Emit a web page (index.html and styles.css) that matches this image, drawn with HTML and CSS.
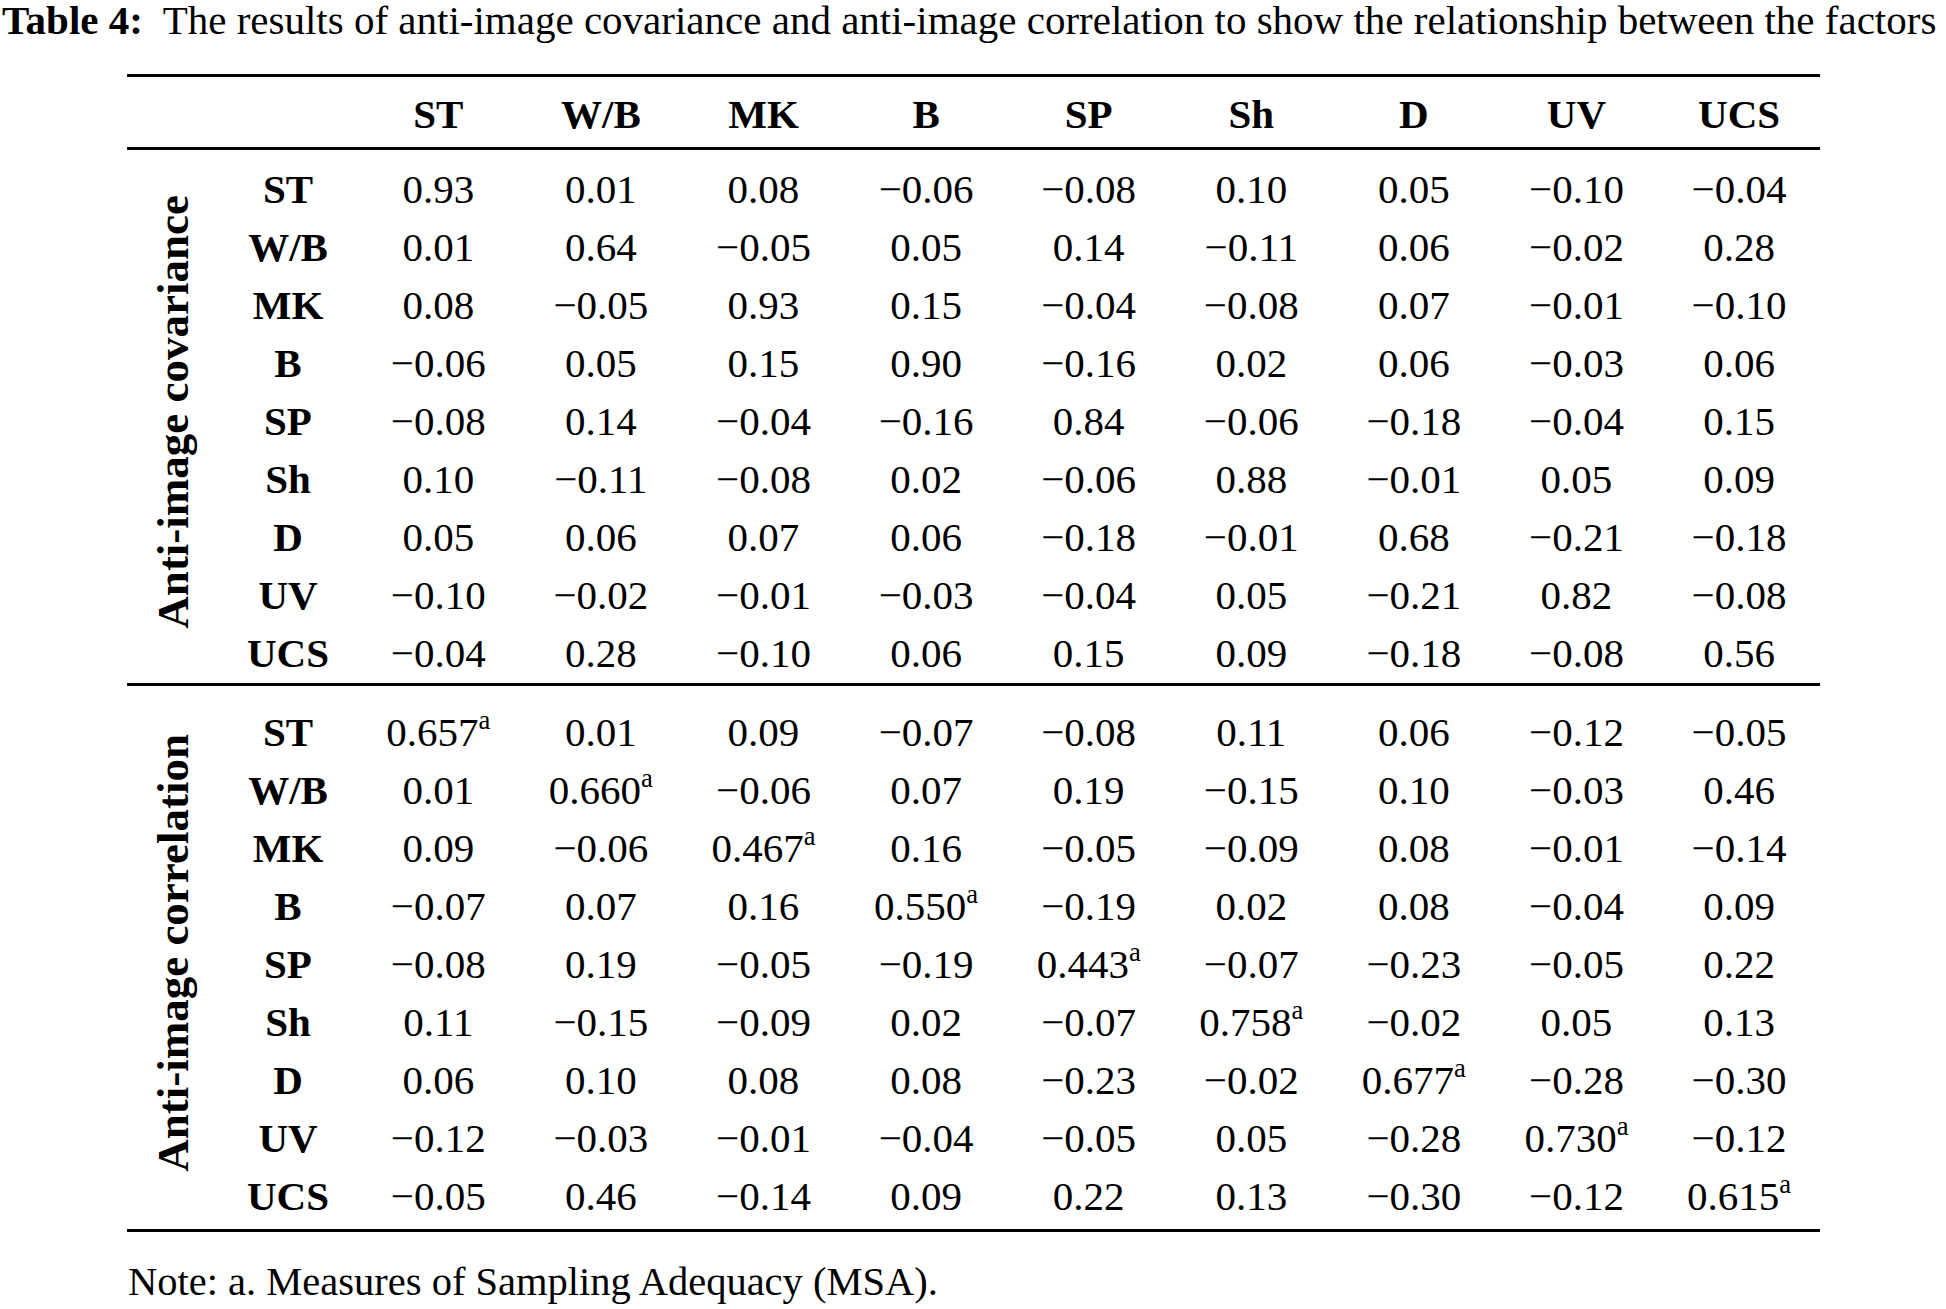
FILE: index.html
```html
<!DOCTYPE html>
<html lang="en">
<head>
<meta charset="utf-8">
<title>Table 4</title>
<link rel="stylesheet" href="styles.css">
</head>
<body>
<div class="page">
  <p class="caption"><b>Table 4:</b>&nbsp; The results of anti-image covariance and anti-image correlation to show the relationship between the factors</p>
  <table class="data">
    <colgroup>
      <col class="c-group"><col class="c-row">
      <col class="c-num"><col class="c-num"><col class="c-num"><col class="c-num"><col class="c-num"><col class="c-num"><col class="c-num"><col class="c-num"><col class="c-num">
    </colgroup>
    <thead>
      <tr><th colspan="2"></th><th>ST</th><th>W/B</th><th>MK</th><th>B</th><th>SP</th><th>Sh</th><th>D</th><th>UV</th><th>UCS</th></tr>
    </thead>
    <tbody class="sec sec1">
      <tr><th rowspan="9" class="group"><span>Anti-image covariance</span></th><th class="rh">ST</th><td>0.93</td><td>0.01</td><td>0.08</td><td>−0.06</td><td>−0.08</td><td>0.10</td><td>0.05</td><td>−0.10</td><td>−0.04</td></tr>
      <tr><th class="rh">W/B</th><td>0.01</td><td>0.64</td><td>−0.05</td><td>0.05</td><td>0.14</td><td>−0.11</td><td>0.06</td><td>−0.02</td><td>0.28</td></tr>
      <tr><th class="rh">MK</th><td>0.08</td><td>−0.05</td><td>0.93</td><td>0.15</td><td>−0.04</td><td>−0.08</td><td>0.07</td><td>−0.01</td><td>−0.10</td></tr>
      <tr><th class="rh">B</th><td>−0.06</td><td>0.05</td><td>0.15</td><td>0.90</td><td>−0.16</td><td>0.02</td><td>0.06</td><td>−0.03</td><td>0.06</td></tr>
      <tr><th class="rh">SP</th><td>−0.08</td><td>0.14</td><td>−0.04</td><td>−0.16</td><td>0.84</td><td>−0.06</td><td>−0.18</td><td>−0.04</td><td>0.15</td></tr>
      <tr><th class="rh">Sh</th><td>0.10</td><td>−0.11</td><td>−0.08</td><td>0.02</td><td>−0.06</td><td>0.88</td><td>−0.01</td><td>0.05</td><td>0.09</td></tr>
      <tr><th class="rh">D</th><td>0.05</td><td>0.06</td><td>0.07</td><td>0.06</td><td>−0.18</td><td>−0.01</td><td>0.68</td><td>−0.21</td><td>−0.18</td></tr>
      <tr><th class="rh">UV</th><td>−0.10</td><td>−0.02</td><td>−0.01</td><td>−0.03</td><td>−0.04</td><td>0.05</td><td>−0.21</td><td>0.82</td><td>−0.08</td></tr>
      <tr><th class="rh">UCS</th><td>−0.04</td><td>0.28</td><td>−0.10</td><td>0.06</td><td>0.15</td><td>0.09</td><td>−0.18</td><td>−0.08</td><td>0.56</td></tr>
    </tbody>
    <tbody class="sec sec2">
      <tr><th rowspan="9" class="group"><span>Anti-image correlation</span></th><th class="rh">ST</th><td>0.657<sup>a</sup></td><td>0.01</td><td>0.09</td><td>−0.07</td><td>−0.08</td><td>0.11</td><td>0.06</td><td>−0.12</td><td>−0.05</td></tr>
      <tr><th class="rh">W/B</th><td>0.01</td><td>0.660<sup>a</sup></td><td>−0.06</td><td>0.07</td><td>0.19</td><td>−0.15</td><td>0.10</td><td>−0.03</td><td>0.46</td></tr>
      <tr><th class="rh">MK</th><td>0.09</td><td>−0.06</td><td>0.467<sup>a</sup></td><td>0.16</td><td>−0.05</td><td>−0.09</td><td>0.08</td><td>−0.01</td><td>−0.14</td></tr>
      <tr><th class="rh">B</th><td>−0.07</td><td>0.07</td><td>0.16</td><td>0.550<sup>a</sup></td><td>−0.19</td><td>0.02</td><td>0.08</td><td>−0.04</td><td>0.09</td></tr>
      <tr><th class="rh">SP</th><td>−0.08</td><td>0.19</td><td>−0.05</td><td>−0.19</td><td>0.443<sup>a</sup></td><td>−0.07</td><td>−0.23</td><td>−0.05</td><td>0.22</td></tr>
      <tr><th class="rh">Sh</th><td>0.11</td><td>−0.15</td><td>−0.09</td><td>0.02</td><td>−0.07</td><td>0.758<sup>a</sup></td><td>−0.02</td><td>0.05</td><td>0.13</td></tr>
      <tr><th class="rh">D</th><td>0.06</td><td>0.10</td><td>0.08</td><td>0.08</td><td>−0.23</td><td>−0.02</td><td>0.677<sup>a</sup></td><td>−0.28</td><td>−0.30</td></tr>
      <tr><th class="rh">UV</th><td>−0.12</td><td>−0.03</td><td>−0.01</td><td>−0.04</td><td>−0.05</td><td>0.05</td><td>−0.28</td><td>0.730<sup>a</sup></td><td>−0.12</td></tr>
      <tr><th class="rh">UCS</th><td>−0.05</td><td>0.46</td><td>−0.14</td><td>0.09</td><td>0.22</td><td>0.13</td><td>−0.30</td><td>−0.12</td><td>0.615<sup>a</sup></td></tr>
    </tbody>
  </table>
  <p class="note">Note: a. Measures of Sampling Adequacy (MSA).</p>
</div>
</body>
</html>
```

FILE: styles.css
```css
html, body {
  margin: 0;
  padding: 0;
  background: #ffffff;
}

body {
  font-family: "Liberation Serif", "Times New Roman", serif;
  color: #000000;
}

.page {
  width: 1946px;
}

.caption {
  margin: 0;
  padding-left: 2px;
  font-size: 41px;
  line-height: 40px;
  white-space: nowrap;
}

.caption b {
  font-weight: 700;
}

.data {
  margin: 34px 0 0 127px;
  width: 1693px;
  border-collapse: collapse;
  table-layout: fixed;
  font-size: 41px;
  line-height: 58px;
  border-top: 3px solid #000;
  border-bottom: 3px solid #000;
}

.c-group { width: 92px; }
.c-row { width: 138px; }
.c-num { width: 162.6px; }

.data th,
.data td {
  padding: 0;
  text-align: center;
  white-space: nowrap;
}

.data th {
  font-weight: 700;
}

.data thead th {
  padding-top: 8px;
  padding-bottom: 4px;
  border-bottom: 3px solid #000;
}

.sec2 {
  border-top: 3px solid #000;
}

.sec1 tr:first-child > * {
  padding-top: 10px;
}

.sec1 tr:last-child > * {
  padding-bottom: 1px;
}

.sec2 tr:first-child > * {
  padding-top: 17px;
}

.sec2 tr:last-child > * {
  padding-bottom: 4px;
}

.data th.group {
  padding: 0;
  vertical-align: middle;
  font-size: 45px;
  line-height: 48px;
}

.group span {
  display: inline-block;
  writing-mode: vertical-rl;
  transform: rotate(180deg);
  white-space: nowrap;
}

.data sup {
  font-size: 0.65em;
  line-height: 0;
  vertical-align: 0.62em;
}

.note {
  margin: 27px 0 0 128px;
  font-size: 40.5px;
  line-height: 46px;
}
```
